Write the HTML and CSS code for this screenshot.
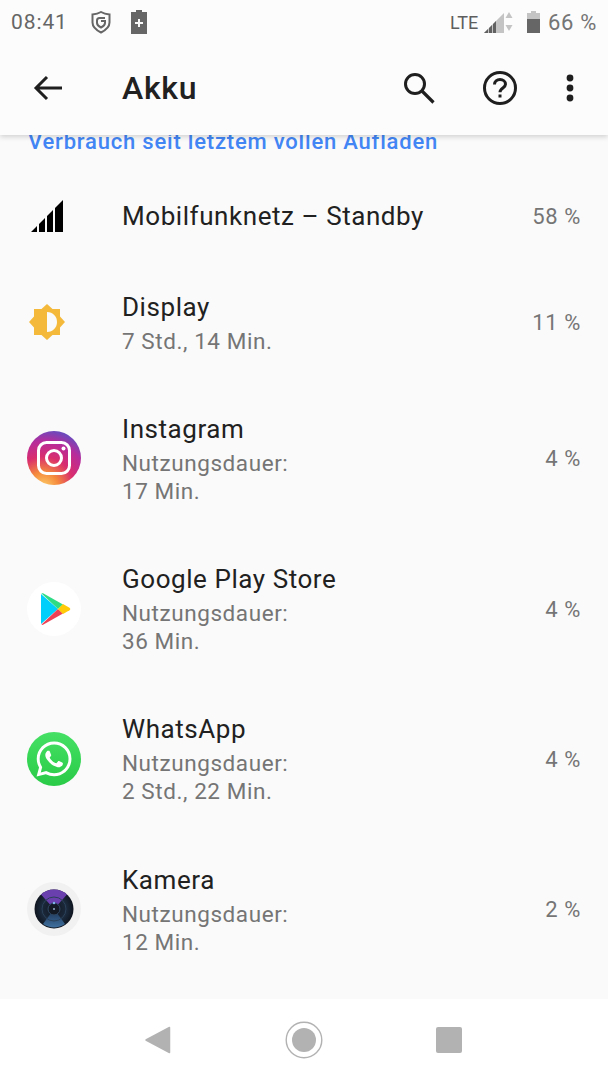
FILE: index.html
```html
<!DOCTYPE html>
<html lang="de">
<head>
<meta charset="utf-8">
<title>Akku</title>
<link rel="stylesheet" href="styles.css">
</head>
<body>
<div class="screen">
  <header class="top">
    <div class="status">
      <span class="time">08:41</span>
      <svg class="st-shield" viewBox="0 0 20 23" width="20" height="23"><path d="M1.500 3.500C5 3.200 7.500 2.500 10 1c2.500 1.500 5 2.200 8.500 2.500v8c0 4.500-3.500 7.500-8.500 10-5-2.500-8.500-5.500-8.500-10z" fill="none" stroke="#666" stroke-width="2"/><path d="M14 7H8.500C7 7 6 8 6 9.500V12c0 2 2 3.500 4 4.500 2-1 4-2.500 4-4.500v-2H10" fill="none" stroke="#666" stroke-width="2"/></svg>
      <svg class="st-bat" viewBox="0 0 16 24" width="16" height="24"><path d="M5 0h6v2h5v22H0V2h5z" fill="#666"/><path d="M7 9h2v3h3v2H9v3H7v-3H4v-2h3z" fill="#fafafa"/></svg>
      <span class="spacer"></span>
      <span class="lte">LTE</span>
      <svg class="st-sig" viewBox="0 0 30 21" width="30" height="21"><path d="M1 21l20-20v20z" fill="#c4c4c4"/><path d="M1 21l4-4v4zM6 16l3-3v8H6zM10 12l3-3v12h-3z" fill="#616161"/><path d="M26 1l3.500 6h-7zM26 20l3.500-6h-7z" transform="translate(0 -1)" fill="#c4c4c4"/></svg>
      <svg class="st-bat2" viewBox="0 0 13 22" width="13" height="22"><path d="M4 0h5v2h4v7H0V2h4z" fill="#c4c4c4"/><path d="M0 8h13v14H0z" fill="#666"/></svg>
      <span class="pct">66 %</span>
    </div>
    <div class="bar">
      <svg class="i-back" viewBox="0 0 30 26" width="30" height="26"><path d="M29 13H3M14 2L3 13l11 11" fill="none" stroke="#1f1f1f" stroke-width="3"/></svg>
      <h1 class="title">Akku</h1>
      <svg class="i-search" viewBox="0 0 32 32" width="32" height="32"><circle cx="12" cy="12" r="9.500" fill="none" stroke="#1f1f1f" stroke-width="3"/><path d="M19 19l11.500 11.500" fill="none" stroke="#1f1f1f" stroke-width="3.200"/></svg>
      <svg class="i-help" viewBox="0 0 34 34" width="34" height="34"><circle cx="17" cy="17" r="15.500" fill="none" stroke="#1f1f1f" stroke-width="3"/><path d="M11.500 13.500c0-3 2.500-5 5.500-5s5.500 2 5.500 4.800c0 3.700-5.500 3.700-5.500 8" fill="none" stroke="#1f1f1f" stroke-width="3"/><rect x="15.500" y="23.500" width="3" height="3" fill="#1f1f1f"/></svg>
      <svg class="i-more" viewBox="0 0 8 28" width="8" height="28"><circle cx="4" cy="4" r="3.400" fill="#1f1f1f"/><circle cx="4" cy="14" r="3.400" fill="#1f1f1f"/><circle cx="4" cy="24" r="3.400" fill="#1f1f1f"/></svg>
    </div>
  </header>

  <main class="list">
    <div class="label">Verbrauch seit letztem vollen Aufladen</div>

    <div class="row row-s">
      <div class="ico">
        <svg viewBox="0 0 36 36" width="36" height="36"><path d="M2 34l6-6v6zM10 34v-8l6-6v14zM18 34V18l6-6v22zM26 34V10l8-8v32z" fill="#000"/></svg>
      </div>
      <div class="txt"><div class="name">Mobilfunknetz – Standby</div></div>
      <div class="val">58 %</div>
    </div>

    <div class="row row-m">
      <div class="ico">
        <svg viewBox="0 0 36 36" width="36" height="36"><path d="M18 0l5.500 5H31v7.500l5 5.500-5 5.500V31h-7.500L18 36l-5.500-5H5v-7.500L0 18l5-5.500V5h7.500z" fill="#f4b93a"/><path d="M18 8c6 0 10 4.500 10 10s-4 10-10 10z" fill="#fafafa"/></svg>
      </div>
      <div class="txt"><div class="name">Display</div><div class="sub">7 Std., 14 Min.</div></div>
      <div class="val">11 %</div>
    </div>

    <div class="row row-l">
      <div class="ico">
        <svg viewBox="0 0 54 54" width="54" height="54">
          <defs>
            <radialGradient id="ig" cx="0.3" cy="1.05" r="1.15">
              <stop offset="0" stop-color="#fed26c"/><stop offset="0.25" stop-color="#f58a3c"/><stop offset="0.5" stop-color="#d92d6e"/><stop offset="0.75" stop-color="#b62c9c"/><stop offset="1" stop-color="#4f55c8"/>
            </radialGradient>
          </defs>
          <circle cx="27" cy="27" r="27" fill="url(#ig)"/>
          <rect x="11.500" y="11.500" width="31" height="31" rx="8" fill="none" stroke="#fff" stroke-width="3"/>
          <circle cx="27" cy="27" r="7.500" fill="none" stroke="#fff" stroke-width="3"/>
          <circle cx="36.500" cy="17.500" r="2" fill="#fff"/>
        </svg>
      </div>
      <div class="txt"><div class="name">Instagram</div><div class="sub">Nutzungsdauer:<br>17 Min.</div></div>
      <div class="val">4 %</div>
    </div>

    <div class="row row-l">
      <div class="ico">
        <svg viewBox="0 0 54 54" width="54" height="54">
          <circle cx="27" cy="27" r="27" fill="#fff"/>
          <path d="M14 12l17 15-17 15z" fill="#00cffb"/>
          <path d="M14.500 11.500c.5-.5 1-.5 2 0L36 22.500 31 27z" fill="#2fdc85"/>
          <path d="M14.500 42.500c.5.5 1 .5 2 0L36 31.500 31 27z" fill="#ee4155"/>
          <path d="M36 22l6.500 3.700c1 .8 1 1.800 0 2.600L36 32l-5-5z" fill="#ffca08"/>
        </svg>
      </div>
      <div class="txt"><div class="name">Google Play Store</div><div class="sub">Nutzungsdauer:<br>36 Min.</div></div>
      <div class="val">4 %</div>
    </div>

    <div class="row row-l">
      <div class="ico">
        <svg viewBox="0 0 54 54" width="54" height="54">
          <defs><linearGradient id="wa" x1="0" y1="0" x2="0" y2="1"><stop offset="0" stop-color="#45e065"/><stop offset="1" stop-color="#2acb47"/></linearGradient></defs>
          <circle cx="27" cy="27" r="27" fill="url(#wa)"/>
          <g transform="translate(9.500 9.500) scale(1.46)"><path fill="#fff" d="M17.472 14.382c-.297-.149-1.758-.867-2.03-.967-.273-.099-.471-.148-.67.15-.197.297-.767.966-.94 1.164-.173.199-.347.223-.644.075-.297-.15-1.255-.463-2.39-1.475-.883-.788-1.48-1.761-1.653-2.059-.173-.297-.018-.458.13-.606.134-.133.298-.347.446-.52.149-.174.198-.298.298-.497.099-.198.05-.371-.025-.52-.075-.149-.669-1.612-.916-2.207-.242-.579-.487-.5-.669-.51-.173-.008-.371-.01-.57-.01-.198 0-.52.074-.792.372-.272.297-1.04 1.016-1.04 2.479 0 1.462 1.065 2.875 1.213 3.074.149.198 2.096 3.2 5.077 4.487.709.306 1.262.489 1.694.625.712.227 1.36.195 1.871.118.571-.085 1.758-.719 2.006-1.413.248-.694.248-1.289.173-1.413-.074-.124-.272-.198-.57-.347m-5.421 7.403h-.004a9.87 9.87 0 01-5.031-1.378l-.361-.214-3.741.982.998-3.648-.235-.374a9.86 9.86 0 01-1.51-5.26c.001-5.45 4.436-9.884 9.888-9.884 2.64 0 5.122 1.03 6.988 2.898a9.825 9.825 0 012.893 6.994c-.003 5.45-4.437 9.884-9.885 9.884m8.413-18.297A11.815 11.815 0 0012.05 0C5.495 0 .16 5.335.157 11.892c0 2.096.547 4.142 1.588 5.945L.057 24l6.305-1.654a11.882 11.882 0 005.683 1.448h.005c6.554 0 11.89-5.335 11.893-11.893a11.821 11.821 0 00-3.48-8.413z"/></g>
        </svg>
      </div>
      <div class="txt"><div class="name">WhatsApp</div><div class="sub">Nutzungsdauer:<br>2 Std., 22 Min.</div></div>
      <div class="val">4 %</div>
    </div>

    <div class="row row-l">
      <div class="ico">
        <svg viewBox="0 0 54 54" width="54" height="54">
          <defs>
            <radialGradient id="cam" cx="0.5" cy="0.5" r="0.55"><stop offset="0" stop-color="#12161f"/><stop offset="0.6" stop-color="#1b2a3d"/><stop offset="1" stop-color="#0c0f16"/></radialGradient>
            <linearGradient id="camb" x1="0" y1="0" x2="0" y2="1"><stop offset="0" stop-color="#1a3050"/><stop offset="1" stop-color="#3f6f9e"/></linearGradient>
          </defs>
          <circle cx="27" cy="27" r="27" fill="#f1f1f1"/>
          <circle cx="27" cy="27" r="19.500" fill="url(#cam)"/>
          <path d="M14 12.500a19.500 19.500 0 0 1 26 0L27 27z" fill="#6a3fae"/>
          <path d="M27 27L16 42a19.500 19.500 0 0 0 22 0z" fill="url(#camb)"/>
          <circle cx="27" cy="27" r="12" fill="none" stroke="#2b4159" stroke-width="1"/>
          <circle cx="27" cy="27" r="6" fill="#141a24" stroke="#2f4964" stroke-width="1"/>
          <circle cx="27" cy="21" r="1.200" fill="#7fb6e8"/>
          <circle cx="27" cy="27" r="1" fill="#8fa8c4"/>
        </svg>
      </div>
      <div class="txt"><div class="name">Kamera</div><div class="sub">Nutzungsdauer:<br>12 Min.</div></div>
      <div class="val">2 %</div>
    </div>
  </main>

  <nav class="nav">
    <svg viewBox="0 0 26 28" width="26" height="28"><path d="M24.500 1.500v25L1 14z" fill="#b2b2b2" stroke="#b2b2b2" stroke-width="1.500" stroke-linejoin="round"/></svg>
    <svg viewBox="0 0 38 38" width="38" height="38"><circle cx="19" cy="19" r="17.800" fill="none" stroke="#b2b2b2" stroke-width="1.400"/><circle cx="19" cy="19" r="12" fill="#b2b2b2"/></svg>
    <svg viewBox="0 0 26 26" width="26" height="26"><rect x="0" y="0" width="26" height="26" rx="2" fill="#b2b2b2"/></svg>
  </nav>
</div>
</body>
</html>
```
FILE: styles.css
```css
* { box-sizing: border-box; }
html, body { margin: 0; padding: 0; }
body { font-family: Roboto, "Noto Sans", sans-serif; background: #fafafa; }
.screen { width: 608px; height: 1080px; display: flex; flex-direction: column; overflow: hidden; }

.top { height: 135px; flex: none; background: #fcfcfc; position: relative; z-index: 2; box-shadow: 0 2px 5px rgba(0,0,0,.16); }

.status { height: 44px; display: flex; align-items: center; padding: 0 11px; color: #666; }
.time { font-size: 21px; letter-spacing: .9px; width: 80px; }
.st-shield { margin-right: 20px; }
.spacer { flex: 1; }
.lte { font-size: 18px; width: 33px; color: #5e5e5e; }
.st-sig { margin-right: 14px; }
.st-bat2 { margin-right: 8px; }
.pct { font-size: 22px; letter-spacing: .7px; color: #757575; }

.bar { height: 91px; display: flex; align-items: center; padding: 0 0 3px 33px; }
.i-back { flex: none; margin-right: 59px; }
.title { flex: 1; margin: 0; font-size: 32px; font-weight: 500; letter-spacing: .7px; color: #212121; }
.i-search { flex: none; margin-right: 48px; }
.i-help { flex: none; margin-right: 49px; }
.i-more { flex: none; margin-right: 34px; }

.list { flex: 1; min-height: 0; overflow: hidden; background: #fafafa; }
.label { height: 36px; padding-left: 28px; font-size: 22px; line-height: 14px; font-weight: 500; letter-spacing: .8px; color: #4285f4; }

.row { display: flex; align-items: center; padding-right: 28px; }
.row-s { height: 90px; }
.row-m { height: 122px; }
.row-l { height: 150.4px; }
.ico { width: 122px; flex: none; padding-left: 27px; display: flex; }
.row-s .ico, .row-m .ico { padding-left: 29px; }
.ico svg { display: block; }
.txt { flex: 1; }
.name { font-size: 26px; line-height: 34px; letter-spacing: .56px; color: #212121; }
.sub { margin-top: 3px; font-size: 22.500px; line-height: 28px; letter-spacing: .57px; color: #757575; }
.val { font-size: 22px; letter-spacing: .6px; padding-top: 1px; margin-right: -1px; color: #757575; }

.nav { height: 81px; flex: none; background: #fff; display: flex; align-items: center; padding: 0 0 0 145px; position: relative; }
.nav svg:nth-child(1) { margin-right: 114px; }
.nav svg:nth-child(2) { margin-right: 113px; }
```
